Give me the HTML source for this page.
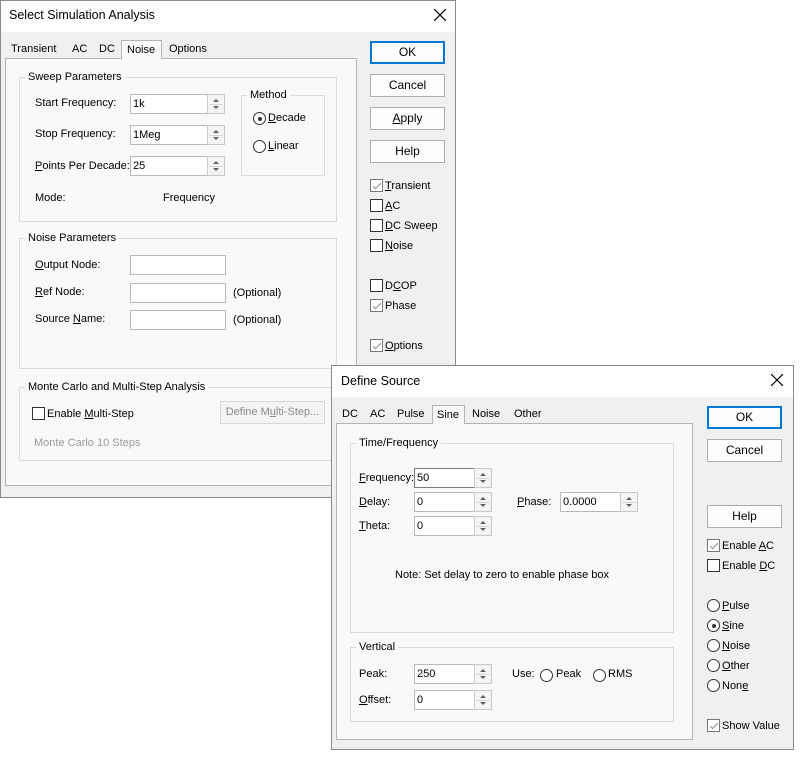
<!DOCTYPE html>
<html><head><meta charset="utf-8"><style>
*{box-sizing:border-box}
body{margin:0;width:800px;height:757px;background:#fff;position:relative;overflow:hidden;font-family:"Liberation Sans",Arial,sans-serif;font-size:11px;color:#000}
.a{position:absolute}
.t{position:absolute;white-space:nowrap;line-height:13px}
.dlg{position:absolute;background:#f0f0f0;border:1px solid #8a8a8a}
.tb{position:absolute;left:0;right:0;top:0;background:#fff}
.pane{position:absolute;background:#f9f9f9;border:1px solid #b4b4b4}
.grp{position:absolute;border:1px solid #dcdcdc}
.lg{position:absolute;background:#f9f9f9;padding:0 3px;line-height:13px;white-space:nowrap}
.in{position:absolute;background:#fff;border:1px solid #b9b9b9;height:20px;padding:2px 0 0 2px;line-height:14px}
.sp{position:absolute;width:18px;height:20px;border:1px solid #c9c9c9;background:#f4f4f4}
.sp:before,.sp:after{content:"";position:absolute;left:5px;border-left:3px solid transparent;border-right:3px solid transparent}
.sp:before{top:4px;border-bottom:3px solid #606060}
.sp:after{top:11px;border-top:3px solid #606060}
.sp i{position:absolute;left:1px;right:1px;top:9px;height:1px;background:#d8d8d8}
.btn{position:absolute;width:75px;height:23px;border:1px solid #adadad;background:#fdfdfd;text-align:center;line-height:21px;font-size:12px}
.ok{border:1px solid #0078d7;box-shadow:inset 0 0 0 1px #0078d7}
.cb{position:absolute;width:13px;height:13px;border:1px solid #333;background:#fff}
.cb.c{border-color:#777}
.cb.c:after{content:"";position:absolute;left:4px;top:1px;width:3px;height:7px;border:solid #888;border-width:0 1px 1px 0;transform:rotate(45deg)}
.rd{position:absolute;width:13px;height:13px;border:1px solid #333;border-radius:50%;background:#fff}
.rd.c:after{content:"";position:absolute;left:3.5px;top:3.5px;width:4px;height:4px;border-radius:50%;background:#333}
.tab{position:absolute;background:#f9f9f9;border:1px solid #b4b4b4;border-bottom:none}
u{text-decoration:underline}
</style></head><body>

<div class="dlg" style="left:0;top:0;width:456px;height:498px">
 <div class="tb" style="height:31px"></div>
</div>
<div class="t" style="left:9px;top:8px;font-size:12.5px;line-height:15px">Select Simulation Analysis</div>
<svg class="a" style="left:434px;top:9px" width="12" height="12"><path d="M0 0L12 12M12 0L0 12" stroke="#000" stroke-width="1.2"/></svg>

<div class="pane" style="left:5px;top:58px;width:352px;height:428px"></div>
<div class="tab" style="left:121px;top:40px;width:41px;height:19px"></div>
<div class="t" style="left:11px;top:43px">Transient</div>
<div class="t" style="left:72px;top:43px">AC</div>
<div class="t" style="left:99px;top:43px">DC</div>
<div class="t" style="left:127px;top:44px">Noise</div>
<div class="t" style="left:169px;top:43px">Options</div>

<div class="grp" style="left:19px;top:77px;width:318px;height:145px"></div>
<div class="lg" style="left:25px;top:71px">Sweep Parameters</div>
<div class="t" style="left:35px;top:97px">Start Frequency:</div>
<div class="t" style="left:35px;top:128px">Stop Frequency:</div>
<div class="t" style="left:35px;top:160px"><u>P</u>oints Per Decade:</div>
<div class="t" style="left:35px;top:192px">Mode:</div>
<div class="t" style="left:163px;top:192px">Frequency</div>
<div class="in" style="left:130px;top:94px;width:78px">1k</div><div class="sp" style="left:207px;top:94px"><i></i></div>
<div class="in" style="left:130px;top:125px;width:78px">1Meg</div><div class="sp" style="left:207px;top:125px"><i></i></div>
<div class="in" style="left:130px;top:156px;width:78px">25</div><div class="sp" style="left:207px;top:156px"><i></i></div>
<div class="grp" style="left:241px;top:95px;width:84px;height:81px"></div>
<div class="lg" style="left:247px;top:89px">Method</div>
<div class="rd c" style="left:253px;top:112px"></div><div class="t" style="left:268px;top:112px"><u>D</u>ecade</div>
<div class="rd" style="left:253px;top:140px"></div><div class="t" style="left:268px;top:140px"><u>L</u>inear</div>

<div class="grp" style="left:19px;top:238px;width:318px;height:131px"></div>
<div class="lg" style="left:25px;top:232px">Noise Parameters</div>
<div class="t" style="left:35px;top:259px"><u>O</u>utput Node:</div>
<div class="t" style="left:35px;top:286px"><u>R</u>ef Node:</div>
<div class="t" style="left:35px;top:313px">Source <u>N</u>ame:</div>
<div class="in" style="left:130px;top:255px;width:96px"></div>
<div class="in" style="left:130px;top:283px;width:96px"></div>
<div class="in" style="left:130px;top:310px;width:96px"></div>
<div class="t" style="left:233px;top:287px">(Optional)</div>
<div class="t" style="left:233px;top:314px">(Optional)</div>

<div class="grp" style="left:19px;top:387px;width:318px;height:74px"></div>
<div class="lg" style="left:25px;top:381px">Monte Carlo and Multi-Step Analysis</div>
<div class="cb" style="left:32px;top:407px;border-color:#333"></div>
<div class="t" style="left:47px;top:408px">Enable <u>M</u>ulti-Step</div>
<div class="a" style="left:220px;top:401px;width:105px;height:23px;border:1px solid #d8d8d8;background:#f4f4f4;color:#8a8a8a;text-align:center;line-height:21px">Define M<u>u</u>lti-Step...</div>
<div class="t" style="left:34px;top:437px;color:#9a9a9a">Monte Carlo 10 Steps</div>

<div class="btn ok" style="left:370px;top:41px">OK</div>
<div class="btn" style="left:370px;top:74px">Cancel</div>
<div class="btn" style="left:370px;top:107px"><u>A</u>pply</div>
<div class="btn" style="left:370px;top:140px">Help</div>
<div class="cb c" style="left:370px;top:179px"></div><div class="t" style="left:385px;top:180px"><u>T</u>ransient</div>
<div class="cb" style="left:370px;top:199px"></div><div class="t" style="left:385px;top:200px"><u>A</u>C</div>
<div class="cb" style="left:370px;top:219px"></div><div class="t" style="left:385px;top:220px"><u>D</u>C Sweep</div>
<div class="cb" style="left:370px;top:239px"></div><div class="t" style="left:385px;top:240px"><u>N</u>oise</div>
<div class="cb" style="left:370px;top:279px"></div><div class="t" style="left:385px;top:280px">D<u>C</u>OP</div>
<div class="cb c" style="left:370px;top:299px"></div><div class="t" style="left:385px;top:300px">Phase</div>
<div class="cb c" style="left:370px;top:339px"></div><div class="t" style="left:385px;top:340px"><u>O</u>ptions</div>

<div class="dlg" style="left:331px;top:365px;width:463px;height:385px">
 <div class="tb" style="height:31px"></div>
</div>
<div class="t" style="left:341px;top:374px;font-size:12.5px;line-height:15px">Define Source</div>
<svg class="a" style="left:771px;top:374px" width="12" height="12"><path d="M0 0L12 12M12 0L0 12" stroke="#000" stroke-width="1.2"/></svg>

<div class="pane" style="left:336px;top:423px;width:357px;height:317px"></div>
<div class="tab" style="left:432px;top:405px;width:33px;height:19px"></div>
<div class="t" style="left:342px;top:408px">DC</div>
<div class="t" style="left:370px;top:408px">AC</div>
<div class="t" style="left:397px;top:408px">Pulse</div>
<div class="t" style="left:437px;top:409px">Sine</div>
<div class="t" style="left:472px;top:408px">Noise</div>
<div class="t" style="left:514px;top:408px">Other</div>

<div class="grp" style="left:350px;top:443px;width:324px;height:190px"></div>
<div class="lg" style="left:356px;top:437px">Time/Frequency</div>
<div class="t" style="left:359px;top:472px"><u>F</u>requency:</div>
<div class="t" style="left:359px;top:496px"><u>D</u>elay:</div>
<div class="t" style="left:359px;top:520px"><u>T</u>heta:</div>
<div class="t" style="left:517px;top:496px"><u>P</u>hase:</div>
<div class="in" style="left:414px;top:468px;width:61px;border-color:#7a7a7a">50</div><div class="sp" style="left:474px;top:468px"><i></i></div>
<div class="in" style="left:414px;top:492px;width:61px">0</div><div class="sp" style="left:474px;top:492px"><i></i></div>
<div class="in" style="left:414px;top:516px;width:61px">0</div><div class="sp" style="left:474px;top:516px"><i></i></div>
<div class="in" style="left:560px;top:492px;width:61px">0.0000</div><div class="sp" style="left:620px;top:492px"><i></i></div>
<div class="t" style="left:395px;top:569px">Note: Set delay to zero to enable phase box</div>

<div class="grp" style="left:350px;top:647px;width:324px;height:75px"></div>
<div class="lg" style="left:356px;top:641px">Vertical</div>
<div class="t" style="left:359px;top:668px">Peak:</div>
<div class="t" style="left:359px;top:694px"><u>O</u>ffset:</div>
<div class="in" style="left:414px;top:664px;width:61px">250</div><div class="sp" style="left:474px;top:664px"><i></i></div>
<div class="in" style="left:414px;top:690px;width:61px">0</div><div class="sp" style="left:474px;top:690px"><i></i></div>
<div class="t" style="left:512px;top:668px">Use:</div>
<div class="rd" style="left:540px;top:669px"></div><div class="t" style="left:556px;top:668px">Peak</div>
<div class="rd" style="left:593px;top:669px"></div><div class="t" style="left:608px;top:668px">RMS</div>

<div class="btn ok" style="left:707px;top:406px">OK</div>
<div class="btn" style="left:707px;top:439px">Cancel</div>
<div class="btn" style="left:707px;top:505px">Help</div>
<div class="cb c" style="left:707px;top:539px"></div><div class="t" style="left:722px;top:540px">Enable <u>A</u>C</div>
<div class="cb" style="left:707px;top:559px"></div><div class="t" style="left:722px;top:560px">Enable <u>D</u>C</div>
<div class="rd" style="left:707px;top:599px"></div><div class="t" style="left:722px;top:600px"><u>P</u>ulse</div>
<div class="rd c" style="left:707px;top:619px"></div><div class="t" style="left:722px;top:620px"><u>S</u>ine</div>
<div class="rd" style="left:707px;top:639px"></div><div class="t" style="left:722px;top:640px"><u>N</u>oise</div>
<div class="rd" style="left:707px;top:659px"></div><div class="t" style="left:722px;top:660px"><u>O</u>ther</div>
<div class="rd" style="left:707px;top:679px"></div><div class="t" style="left:722px;top:680px">Non<u>e</u></div>
<div class="cb c" style="left:707px;top:719px"></div><div class="t" style="left:722px;top:720px">Show Value</div>
</body></html>
